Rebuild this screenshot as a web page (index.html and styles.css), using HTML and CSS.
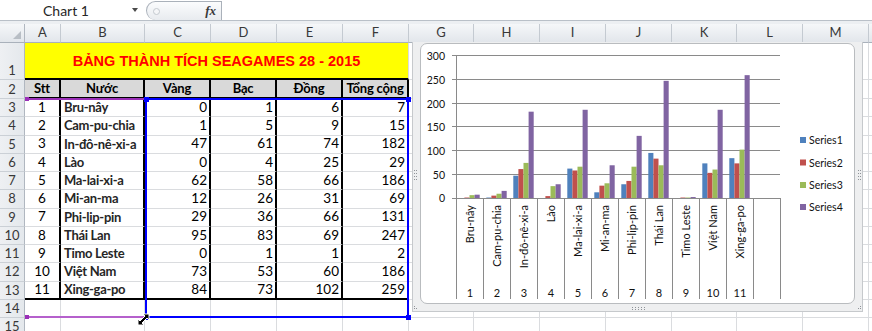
FILE: index.html
```html
<!DOCTYPE html>
<html lang="vi">
<head>
    <meta charset="UTF-8">
    <title>Bảng thành tích SEA Games 28 - 2015</title>
    <link rel="stylesheet" href="styles.css">
</head>
<body>
    <div class="formula-bar">
        <div class="name-box">
            <span class="name">Chart 1</span>
            <span class="caret"></span>
        </div>
        <div class="fx-box">
            <span class="grip"></span>
            <span class="fx">fx</span>
        </div>
        <div class="formula-input"></div>
    </div>
    <div class="band"></div>

    <div class="sheet">
        <div class="row head">
            <div class="corner"><span class="tri"></span></div>
            <div>A</div><div>B</div><div>C</div><div>D</div><div>E</div><div>F</div>
            <div>G</div><div>H</div><div>I</div><div>J</div><div>K</div><div>L</div><div>M</div><div></div>
        </div>

        <div class="row r1">
            <div class="rh">1</div>
            <div class="title">BẢNG THÀNH TÍCH SEAGAMES 28 - 2015</div>
            <div></div><div></div><div></div><div></div><div></div><div></div><div></div><div></div>
        </div>

        <div class="row r2">
            <div class="rh">2</div>
            <div class="th">Stt</div><div class="th">Nước</div><div class="th">Vàng</div>
            <div class="th">Bạc</div><div class="th">Đồng</div><div class="th">Tổng cộng</div>
            <div></div><div></div><div></div><div></div><div></div><div></div><div></div><div></div>
        </div>

        <div class="row">
            <div class="rh">3</div>
            <div class="td ctr">1</div><div class="td name">Bru-nây</div>
            <div class="td num">0</div><div class="td num">1</div><div class="td num">6</div><div class="td num">7</div>
            <div></div><div></div><div></div><div></div><div></div><div></div><div></div><div></div>
        </div>
        <div class="row">
            <div class="rh">4</div>
            <div class="td ctr">2</div><div class="td name">Cam-pu-chia</div>
            <div class="td num">1</div><div class="td num">5</div><div class="td num">9</div><div class="td num">15</div>
            <div></div><div></div><div></div><div></div><div></div><div></div><div></div><div></div>
        </div>
        <div class="row">
            <div class="rh">5</div>
            <div class="td ctr">3</div><div class="td name">In-đô-nê-xi-a</div>
            <div class="td num">47</div><div class="td num">61</div><div class="td num">74</div><div class="td num">182</div>
            <div></div><div></div><div></div><div></div><div></div><div></div><div></div><div></div>
        </div>
        <div class="row">
            <div class="rh">6</div>
            <div class="td ctr">4</div><div class="td name">Lào</div>
            <div class="td num">0</div><div class="td num">4</div><div class="td num">25</div><div class="td num">29</div>
            <div></div><div></div><div></div><div></div><div></div><div></div><div></div><div></div>
        </div>
        <div class="row">
            <div class="rh">7</div>
            <div class="td ctr">5</div><div class="td name">Ma-lai-xi-a</div>
            <div class="td num">62</div><div class="td num">58</div><div class="td num">66</div><div class="td num">186</div>
            <div></div><div></div><div></div><div></div><div></div><div></div><div></div><div></div>
        </div>
        <div class="row">
            <div class="rh">8</div>
            <div class="td ctr">6</div><div class="td name">Mi-an-ma</div>
            <div class="td num">12</div><div class="td num">26</div><div class="td num">31</div><div class="td num">69</div>
            <div></div><div></div><div></div><div></div><div></div><div></div><div></div><div></div>
        </div>
        <div class="row">
            <div class="rh">9</div>
            <div class="td ctr">7</div><div class="td name">Phi-lip-pin</div>
            <div class="td num">29</div><div class="td num">36</div><div class="td num">66</div><div class="td num">131</div>
            <div></div><div></div><div></div><div></div><div></div><div></div><div></div><div></div>
        </div>
        <div class="row">
            <div class="rh">10</div>
            <div class="td ctr">8</div><div class="td name">Thái Lan</div>
            <div class="td num">95</div><div class="td num">83</div><div class="td num">69</div><div class="td num">247</div>
            <div></div><div></div><div></div><div></div><div></div><div></div><div></div><div></div>
        </div>
        <div class="row">
            <div class="rh">11</div>
            <div class="td ctr">9</div><div class="td name">Timo Leste</div>
            <div class="td num">0</div><div class="td num">1</div><div class="td num">1</div><div class="td num">2</div>
            <div></div><div></div><div></div><div></div><div></div><div></div><div></div><div></div>
        </div>
        <div class="row">
            <div class="rh">12</div>
            <div class="td ctr">10</div><div class="td name">Việt Nam</div>
            <div class="td num">73</div><div class="td num">53</div><div class="td num">60</div><div class="td num">186</div>
            <div></div><div></div><div></div><div></div><div></div><div></div><div></div><div></div>
        </div>
        <div class="row last">
            <div class="rh">13</div>
            <div class="td ctr">11</div><div class="td name">Xing-ga-po</div>
            <div class="td num">84</div><div class="td num">73</div><div class="td num">102</div><div class="td num">259</div>
            <div></div><div></div><div></div><div></div><div></div><div></div><div></div><div></div>
        </div>
        <div class="row">
            <div class="rh">14</div>
            <div></div><div></div><div></div><div></div><div></div><div></div><div></div>
            <div></div><div></div><div></div><div></div><div></div><div></div><div></div>
        </div>
        <div class="row">
            <div class="rh">15</div>
            <div></div><div></div><div></div><div></div><div></div><div></div><div></div>
            <div></div><div></div><div></div><div></div><div></div><div></div><div></div>
        </div>

        <!-- chart data ranges -->
        <div class="sel-purple"></div>
        <div class="sel-blue"></div>
        <span class="handle purple tl"></span>
        <span class="handle purple bl"></span>
        <span class="handle blue tl"></span>
        <span class="handle blue tr"></span>
        <span class="handle blue bl"></span>
        <span class="handle blue br"></span>
        <svg class="cursor" viewBox="0 0 13 13" width="13" height="13">
            <path d="M1 12 L1 6 L3 8 L8 3 L6 1 L12 1 L12 7 L10 5 L5 10 L7 12 Z" fill="#000" stroke="#fff" stroke-width="1"/>
        </svg>

        <!-- chart object -->
        <div class="chart">
            <div class="chart-area"></div>
            <svg class="chart-svg" viewBox="412 42 451 270" width="451" height="270">
                <g class="gridlines" shape-rendering="crispEdges">
                    <line x1="452" x2="780" y1="55.5" y2="55.5"/>
                    <line x1="452" x2="780" y1="79.5" y2="79.5"/>
                    <line x1="452" x2="780" y1="103.5" y2="103.5"/>
                    <line x1="452" x2="780" y1="126.5" y2="126.5"/>
                    <line x1="452" x2="780" y1="150.5" y2="150.5"/>
                    <line x1="452" x2="780" y1="174.5" y2="174.5"/>
                    <line x1="452" x2="780" y1="198.5" y2="198.5"/>
                    <line x1="456.5" x2="456.5" y1="55" y2="198"/>
                </g>
                <g class="gridlines" shape-rendering="crispEdges">
                    <line x1="456.5" x2="456.5" y1="198" y2="299"/>
                    <line x1="483.5" x2="483.5" y1="198" y2="299"/>
                    <line x1="510.5" x2="510.5" y1="198" y2="299"/>
                    <line x1="537.5" x2="537.5" y1="198" y2="299"/>
                    <line x1="564.5" x2="564.5" y1="198" y2="299"/>
                    <line x1="591.5" x2="591.5" y1="198" y2="299"/>
                    <line x1="618.5" x2="618.5" y1="198" y2="299"/>
                    <line x1="645.5" x2="645.5" y1="198" y2="299"/>
                    <line x1="672.5" x2="672.5" y1="198" y2="299"/>
                    <line x1="699.5" x2="699.5" y1="198" y2="299"/>
                    <line x1="726.5" x2="726.5" y1="198" y2="299"/>
                    <line x1="753.5" x2="753.5" y1="198" y2="299"/>
                    <line x1="780.5" x2="780.5" y1="198" y2="299"/>
                </g>

                <!-- bars: value units, 0.4743 px per medal -->
                <g transform="translate(456 198) scale(1 -0.4743)">
                    <g class="s1">
                        <rect x="30.3" width="5.1" height="1"/>
                        <rect x="57.3" width="5.1" height="47"/>
                        <rect x="111.3" width="5.1" height="62"/>
                        <rect x="138.3" width="5.1" height="12"/>
                        <rect x="165.3" width="5.1" height="29"/>
                        <rect x="192.3" width="5.1" height="95"/>
                        <rect x="246.3" width="5.1" height="73"/>
                        <rect x="273.3" width="5.1" height="84"/>
                    </g>
                    <g class="s2">
                        <rect x="8.4" width="5.1" height="1"/>
                        <rect x="35.4" width="5.1" height="5"/>
                        <rect x="62.4" width="5.1" height="61"/>
                        <rect x="89.4" width="5.1" height="4"/>
                        <rect x="116.4" width="5.1" height="58"/>
                        <rect x="143.4" width="5.1" height="26"/>
                        <rect x="170.4" width="5.1" height="36"/>
                        <rect x="197.4" width="5.1" height="83"/>
                        <rect x="224.4" width="5.1" height="1"/>
                        <rect x="251.4" width="5.1" height="53"/>
                        <rect x="278.4" width="5.1" height="73"/>
                    </g>
                    <g class="s3">
                        <rect x="13.5" width="5.1" height="6"/>
                        <rect x="40.5" width="5.1" height="9"/>
                        <rect x="67.5" width="5.1" height="74"/>
                        <rect x="94.5" width="5.1" height="25"/>
                        <rect x="121.5" width="5.1" height="66"/>
                        <rect x="148.5" width="5.1" height="31"/>
                        <rect x="175.5" width="5.1" height="66"/>
                        <rect x="202.5" width="5.1" height="69"/>
                        <rect x="229.5" width="5.1" height="1"/>
                        <rect x="256.5" width="5.1" height="60"/>
                        <rect x="283.5" width="5.1" height="102"/>
                    </g>
                    <g class="s4">
                        <rect x="18.6" width="5.1" height="7"/>
                        <rect x="45.6" width="5.1" height="15"/>
                        <rect x="72.6" width="5.1" height="182"/>
                        <rect x="99.6" width="5.1" height="29"/>
                        <rect x="126.6" width="5.1" height="186"/>
                        <rect x="153.6" width="5.1" height="69"/>
                        <rect x="180.6" width="5.1" height="131"/>
                        <rect x="207.6" width="5.1" height="247"/>
                        <rect x="234.6" width="5.1" height="2"/>
                        <rect x="261.6" width="5.1" height="186"/>
                        <rect x="288.6" width="5.1" height="259"/>
                    </g>
                </g>

                <g class="axis-labels" text-anchor="end">
                    <text x="445" y="59.5">300</text>
                    <text x="445" y="83.5">250</text>
                    <text x="445" y="107.5">200</text>
                    <text x="445" y="130.5">150</text>
                    <text x="445" y="154.5">100</text>
                    <text x="445" y="178.5">50</text>
                    <text x="445" y="202">0</text>
                </g>

                <g class="cat-labels" transform="rotate(-90)" text-anchor="end">
                    <text x="-205" y="473.5">Bru-nây</text>
                    <text x="-205" y="500.5">Cam-pu-chia</text>
                    <text x="-205" y="527.5">In-đô-nê-xi-a</text>
                    <text x="-205" y="554.5">Lào</text>
                    <text x="-205" y="581.5">Ma-lai-xi-a</text>
                    <text x="-205" y="608.5">Mi-an-ma</text>
                    <text x="-205" y="635.5">Phi-lip-pin</text>
                    <text x="-205" y="662.5">Thái Lan</text>
                    <text x="-205" y="689.5">Timo Leste</text>
                    <text x="-205" y="716.5">Việt Nam</text>
                    <text x="-205" y="743.5">Xing-ga-po</text>
                </g>

                <g class="cat-labels" text-anchor="middle">
                    <text x="470" y="297">1</text>
                    <text x="497" y="297">2</text>
                    <text x="524" y="297">3</text>
                    <text x="551" y="297">4</text>
                    <text x="578" y="297">5</text>
                    <text x="605" y="297">6</text>
                    <text x="632" y="297">7</text>
                    <text x="659" y="297">8</text>
                    <text x="686" y="297">9</text>
                    <text x="713" y="297">10</text>
                    <text x="740" y="297">11</text>
                </g>

                <g class="legend">
                    <rect class="s1" x="800" y="137" width="6" height="6"/>
                    <text x="809" y="144">Series1</text>
                    <rect class="s2" x="800" y="159.5" width="6" height="6"/>
                    <text x="809" y="166.5">Series2</text>
                    <rect class="s3" x="800" y="182" width="6" height="6"/>
                    <text x="809" y="189">Series3</text>
                    <rect class="s4" x="800" y="204" width="6" height="6"/>
                    <text x="809" y="211">Series4</text>
                </g>

                <g class="grips">
                    <rect x="414" y="170" width="1" height="1"/><rect x="416" y="170" width="1" height="1"/>
                    <rect x="414" y="173" width="1" height="1"/><rect x="416" y="173" width="1" height="1"/>
                    <rect x="414" y="176" width="1" height="1"/><rect x="416" y="176" width="1" height="1"/>
                    <rect x="414" y="179" width="1" height="1"/><rect x="416" y="179" width="1" height="1"/>
                    <rect x="858" y="170" width="1" height="1"/><rect x="860" y="170" width="1" height="1"/>
                    <rect x="858" y="173" width="1" height="1"/><rect x="860" y="173" width="1" height="1"/>
                    <rect x="858" y="176" width="1" height="1"/><rect x="860" y="176" width="1" height="1"/>
                    <rect x="858" y="179" width="1" height="1"/><rect x="860" y="179" width="1" height="1"/>
                    <rect x="632" y="307" width="1" height="1"/><rect x="632" y="309" width="1" height="1"/>
                    <rect x="635" y="307" width="1" height="1"/><rect x="635" y="309" width="1" height="1"/>
                    <rect x="638" y="307" width="1" height="1"/><rect x="638" y="309" width="1" height="1"/>
                    <rect x="641" y="307" width="1" height="1"/><rect x="641" y="309" width="1" height="1"/>
                    <rect x="644" y="307" width="1" height="1"/><rect x="644" y="309" width="1" height="1"/>
                    <rect x="860" y="306" width="1" height="1"/><rect x="858" y="308" width="1" height="1"/>
                    <rect x="860" y="308" width="1" height="1"/><rect x="414" y="306" width="1" height="1"/>
                    <rect x="414" y="308" width="1" height="1"/><rect x="416" y="308" width="1" height="1"/>
                </g>
            </svg>
        </div>
    </div>
</body>
</html>
```

FILE: styles.css
```css
body {
    margin: 0;
    width: 872px;
    height: 331px;
    overflow: hidden;
    background: #fff;
    font-family: "Lato", "Liberation Sans", sans-serif;
    color: #000;
}

/* name box + formula bar */
.formula-bar {
    display: flex;
    height: 20px;
    border-bottom: 1px solid #b9c0c8;
}

.name-box {
    width: 146px;
    display: flex;
    align-items: center;
    padding-left: 43px;
    box-sizing: border-box;
}

.name {
    font-size: 14px;
    color: #262626;
}

.caret {
    margin-left: auto;
    margin-right: 8px;
    border-left: 3px solid transparent;
    border-right: 3px solid transparent;
    border-top: 4px solid #4a4a4a;
}

.fx-box {
    width: 76px;
    height: 19px;
    margin-top: 1px;
    box-sizing: border-box;
    display: flex;
    align-items: center;
    justify-content: space-between;
    padding: 0 5px 0 6px;
    border: 1px solid #aab1ba;
    border-bottom: none;
    border-radius: 10px 0 0 10px;
    background: linear-gradient(#fbfcfd, #e8ebef);
}

.grip {
    width: 5px;
    height: 5px;
    border-radius: 50%;
    border: 1px solid #c4c9cf;
    background: #f5f6f8;
}

.fx {
    font-family: "Liberation Serif", serif;
    font-style: italic;
    font-weight: bold;
    font-size: 13px;
    color: #3a3a3a;
}

.formula-input {
    flex: 1;
}

.band {
    height: 3px;
    background: #eceff2;
}

/* sheet grid */
.sheet {
    position: relative;
}

.row {
    display: grid;
    grid-template-columns: 25px 36px 84px 66px 66px 66px 66px 65px 66px 66px 66px 65px 66px 66px 66px;
    grid-template-rows: 100%;
    height: 18.25px;
}

.row > div {
    box-sizing: border-box;
    border-right: 1px solid #dadcdf;
    border-bottom: 1px solid #dadcdf;
    display: flex;
    align-items: center;
    padding: 0 2px;
    font-size: 13.5px;
    line-height: 1;
    white-space: nowrap;
    overflow: hidden;
}

.head {
    height: 18.5px;
}

.head > div {
    justify-content: center;
    background: linear-gradient(#f5f7f9, #e2e6eb);
    border-right: 1px solid #c4cad1;
    border-bottom: 1px solid #a9b1bb;
    color: #383838;
    font-size: 13px;
}

.head > .corner {
    position: relative;
    border-right-color: #b0b7c0;
}

.tri {
    position: absolute;
    right: 3px;
    bottom: 3px;
    border-left: 8px solid transparent;
    border-bottom: 8px solid #b8bec5;
}

.row > .rh {
    justify-content: center;
    background: linear-gradient(90deg, #eef0f3, #e4e8ec);
    border-right: 1px solid #b0b7c0;
    border-bottom: 1px solid #cbd0d6;
    color: #383838;
    font-size: 13px;
}

.r1 {
    height: 37.5px;
}

.r1 > .rh {
    align-items: flex-end;
    padding-bottom: 2px;
}

.row > .title {
    grid-column: span 6;
    justify-content: center;
    background: #ffff00;
    color: #ff0000;
    font-family: "Liberation Sans", sans-serif;
    font-weight: bold;
    font-size: 14.5px;
    padding-top: 1px;
    border-bottom: 2px solid #000;
}

.r2 {
    height: 19px;
}

.row > .th {
    justify-content: center;
    background: #d9d9d9;
    font-weight: bold;
    font-size: 13px;
    letter-spacing: -0.2px;
    border-right: 2px solid #000;
    border-bottom: 2px solid #000;
}

.row > .td {
    border-right: 2px solid #000;
}

.last > .td {
    border-bottom: 2px solid #000;
}

.row > .ctr {
    justify-content: center;
}

.row > .num {
    justify-content: flex-end;
    padding-right: 2px;
}

.row > .name {
    font-weight: bold;
    font-size: 13px;
    letter-spacing: -0.3px;
    padding-left: 3px;
}

/* chart source ranges */
.sel-blue {
    position: absolute;
    left: 145px;
    top: 74px;
    width: 264px;
    height: 220px;
    box-sizing: border-box;
    border: 2px solid #0000ff;
}

.sel-purple {
    position: absolute;
    left: 26px;
    top: 74px;
    width: 120px;
    height: 220px;
    box-sizing: border-box;
    border-top: 2px solid #9b2fb8;
    border-bottom: 2px solid #b560cc;
}

.handle {
    position: absolute;
    width: 5px;
    height: 5px;
}

.handle.blue { background: #0000ff; }
.handle.purple { background: #9b2fb8; width: 4px; height: 4px; }

.handle.blue.tl { left: 144px; top: 73px; }
.handle.blue.tr { left: 406px; top: 73px; }
.handle.blue.bl { left: 144px; top: 291px; }
.handle.blue.br { left: 406px; top: 291px; }
.handle.purple.tl { left: 25px; top: 73px; }
.handle.purple.bl { left: 25px; top: 291px; }

.cursor {
    position: absolute;
    left: 137px;
    top: 289px;
}

/* embedded chart */
.chart {
    position: absolute;
    left: 412px;
    top: 18px;
    width: 451px;
    height: 270px;
    box-sizing: border-box;
    background: #eeeff0;
    border: 1px solid #c6c9cc;
    border-top: none;
}

.chart-area {
    position: absolute;
    left: 7px;
    top: 1px;
    right: 7px;
    bottom: 7px;
    background: #fff;
    border: 1px solid #b9bcbf;
    border-radius: 7px;
}

.chart-svg {
    position: absolute;
    left: -1px;
    top: 0;
    font-family: "Lato", "Liberation Sans", sans-serif;
}

.gridlines line {
    stroke: #8a8a8a;
    stroke-width: 1;
}

.s1, .s1 rect { fill: #4f81bd; }
.s2, .s2 rect { fill: #c0504d; }
.s3, .s3 rect { fill: #9bbb59; }
.s4, .s4 rect { fill: #8064a2; }

.axis-labels text {
    font-size: 10.5px;
    fill: #111;
}

.cat-labels text {
    font-size: 11px;
    fill: #111;
}

.legend text {
    font-size: 10.5px;
    fill: #111;
}

.grips rect {
    fill: #8f9398;
}
```
